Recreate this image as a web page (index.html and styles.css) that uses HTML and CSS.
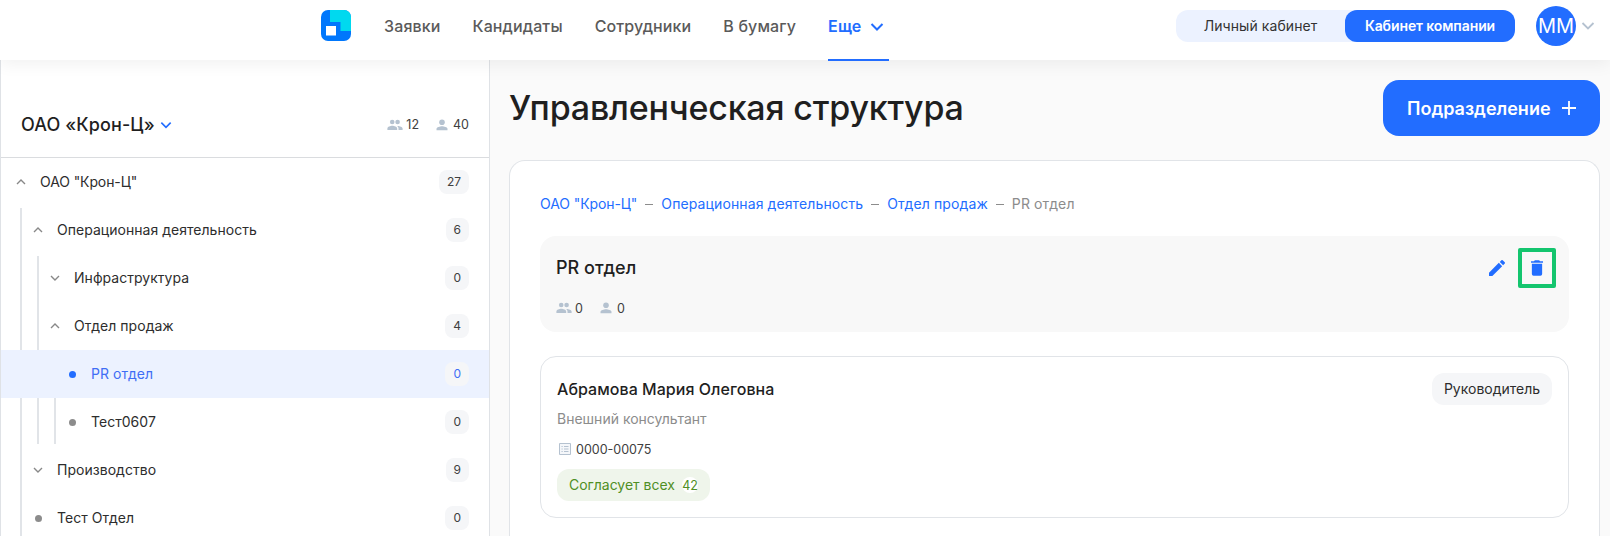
FILE: index.html
```html
<!DOCTYPE html>
<html lang="ru">
<head>
<meta charset="utf-8">
<title>Управленческая структура</title>
<link rel="stylesheet" href="styles.css">
</head>
<body>
<svg class="defs" width="0" height="0">
  <symbol id="people" viewBox="0 0 16 12"><circle cx="5.2" cy="3" r="2.3"/><circle cx="10.6" cy="3" r="2.3"/><path d="M.4 11V9.6C.4 7.8 3.4 6.8 5.3 6.8s4.900 1 4.900 2.800V11zM11.500 11V9.600c0-1-.5-1.900-1.400-2.600 2-.2 5.500.7 5.500 2.600V11z"/></symbol>
  <symbol id="person" viewBox="0 0 12 12"><circle cx="6" cy="3.300" r="2.800"/><path d="M.5 11.300V10C.5 8.200 4 7.300 6 7.300s5.500.9 5.500 2.700v1.300z"/></symbol>
  <symbol id="down" viewBox="0 0 12 12"><path d="M2 4l4 4 4-4" fill="none" stroke="currentColor" stroke-width="1.400"/></symbol>
  <symbol id="up" viewBox="0 0 12 12"><path d="M2 8l4-4 4 4" fill="none" stroke="currentColor" stroke-width="1.400"/></symbol>
</svg>
<header class="header">
  <svg class="logo" viewBox="0 0 30 31"><rect width="30" height="31" rx="7" fill="#0077fc"/><path d="M9 0h14a7 7 0 0 1 7 7v14H19.500V12H9z" fill="#00d9ef"/><rect x="5" y="16" width="10" height="9.500" fill="#fff"/></svg>
  <nav class="nav">
    <a>Заявки</a><a>Кандидаты</a><a>Сотрудники</a><a>В бумагу</a>
    <a class="active">Еще<svg class="nav-chevron" viewBox="0 0 14 10"><path d="M1.500 2L7 7.500 12.500 2" fill="none" stroke="currentColor" stroke-width="2"/></svg></a>
  </nav>
  <div class="switch"><span class="switch-item">Личный кабинет</span><span class="switch-item on">Кабинет компании</span></div>
  <div class="avatar">ММ</div>
  <svg class="user-chevron" viewBox="0 0 14 10"><path d="M1.500 2L7 7.500 12.500 2" fill="none" stroke="currentColor" stroke-width="1.800"/></svg>
</header>
<div class="layout">
  <aside class="sidebar">
    <div class="company">
      <span class="company-name">ОАО «Крон-Ц»</span>
      <svg class="company-chevron"><use href="#down"/></svg>
      <div class="stats"><svg class="people"><use href="#people"/></svg><span>12</span><svg class="person"><use href="#person"/></svg><span>40</span></div>
    </div>
    <div class="tree">
      <div class="row l0"><svg class="mark"><use href="#up"/></svg><span class="label">ОАО "Крон-Ц"</span><span class="count">27</span></div>
      <div class="row l1"><i class="guide first"></i><svg class="mark"><use href="#up"/></svg><span class="label">Операционная деятельность</span><span class="count">6</span></div>
      <div class="row l2"><i class="guide"></i><i class="guide first"></i><svg class="mark"><use href="#down"/></svg><span class="label">Инфраструктура</span><span class="count">0</span></div>
      <div class="row l2"><i class="guide"></i><i class="guide"></i><svg class="mark"><use href="#up"/></svg><span class="label">Отдел продаж</span><span class="count">4</span></div>
      <div class="row l3 selected"><i class="guide"></i><i class="guide"></i><i class="guide"></i><b class="dot"></b><span class="label">PR отдел</span><span class="count">0</span></div>
      <div class="row l3"><i class="guide"></i><i class="guide last"></i><i class="guide last"></i><b class="dot"></b><span class="label">Тест0607</span><span class="count">0</span></div>
      <div class="row l1"><i class="guide"></i><svg class="mark"><use href="#down"/></svg><span class="label">Производство</span><span class="count">9</span></div>
      <div class="row l1 end"><i class="guide"></i><b class="dot"></b><span class="label">Тест Отдел</span><span class="count">0</span></div>
    </div>
  </aside>
  <main class="main">
    <div class="title-row">
      <h1>Управленческая структура</h1>
      <button class="add"><span>Подразделение</span><svg viewBox="0 0 14 14"><path d="M7 0v14M0 7h14" stroke="#fff" stroke-width="1.800"/></svg></button>
    </div>
    <section class="card">
      <div class="crumbs"><a>ОАО "Крон-Ц"</a><i></i><a>Операционная деятельность</a><i></i><a>Отдел продаж</a><i></i><span>PR отдел</span></div>
      <div class="unit">
        <div class="unit-info">
          <h2>PR отдел</h2>
          <div class="stats"><svg class="people"><use href="#people"/></svg><span>0</span><svg class="person"><use href="#person"/></svg><span>0</span></div>
        </div>
        <div class="actions">
          <svg class="pencil" viewBox="3 3 18 18"><path d="M3 17.250V21h3.750L17.810 9.940l-3.750-3.750zM20.710 7.040a1 1 0 0 0 0-1.410l-2.340-2.340a1 1 0 0 0-1.410 0l-1.830 1.830 3.750 3.750z"/></svg>
          <span class="highlight"><svg class="trash" viewBox="5 3 14 18"><path d="M6 19a2 2 0 0 0 2 2h8a2 2 0 0 0 2-2V7H6zM19 4h-3.500l-1-1h-5l-1 1H5v2h14z"/></svg></span>
        </div>
      </div>
      <div class="employee">
        <div class="employee-info">
          <h3>Абрамова Мария Олеговна</h3>
          <p>Внешний консультант</p>
          <div class="number"><svg viewBox="0 0 12 12"><path d="M.5.500h11v11H.5z" fill="#f5f7fa" stroke="#b5c2d0"/><path d="M2.500 3.500h1.200M2.500 6h1.200M2.500 8.500h1.200M5 3.500h4.500M5 6h4.500M5 8.500h4.500" stroke="#b5c2d0"/></svg><span>0000-00075</span></div>
          <div class="approves"><span>Согласует всех</span><b>42</b></div>
        </div>
        <span class="role">Руководитель</span>
      </div>
    </section>
  </main>
</div>
</body>
</html>
```
FILE: styles.css
```css
* { box-sizing: border-box; }
body { margin: 0; height: 536px; overflow: hidden; background: #fafafa; color: #1f1f1f; font-family: Inter, "Liberation Sans", sans-serif; font-size: 14px; }
h1, h2, h3, p { margin: 0; font-weight: 500; white-space: nowrap; }
span, a { white-space: nowrap; }
svg { display: block; flex: none; }
.defs { position: absolute; }
.header { position: relative; z-index: 1; display: flex; height: 60px; padding-left: 321px; background: #fff; box-shadow: 0 4px 16px rgba(0, 0, 0, .06); }
.logo { width: 30px; height: 31px; margin-top: 10px; }
.nav { display: flex; gap: 32px; height: 61px; margin-left: 33px; color: #5a5a5a; font-size: 16px; font-weight: 500; letter-spacing: .13px; line-height: 52px; }
.nav .active { display: flex; width: 61px; color: #226dff; border-bottom: 2px solid #226dff; font-weight: 600; }
.nav-chevron { width: 14px; height: 10px; margin: 22px 0 0 9px; }
.switch { display: flex; width: 339px; height: 32px; margin: 10px 0 0 auto; border-radius: 12px; background: #ecf2ff; }
.switch-item { width: 169px; color: #333; text-align: center; letter-spacing: .08px; line-height: 32px; }
.switch-item.on { width: 170px; border-radius: 12px; background: #226dff; color: #fff; font-weight: 600; letter-spacing: -.1px; }
.avatar { width: 40px; height: 40px; margin: 6px 0 0 21px; border-radius: 50%; background: #226dff; color: #fff; font-size: 20px; line-height: 40px; text-align: center; }
.user-chevron { width: 14px; height: 10px; margin: 21px 15px 0 5px; color: #b5c2d0; }
.layout { display: flex; height: 476px; }
.sidebar { flex: none; width: 490px; height: 476px; overflow: hidden; background: #fff; border: solid #dfe2e6; border-width: 0 1px; }
.company { display: flex; align-items: center; height: 98px; padding: 32px 20px 0 20px; border-bottom: 1px solid #dadcdf; }
.company-name { font-size: 18px; font-weight: 500; letter-spacing: .1px; }
.company-chevron { width: 14px; height: 14px; margin-left: 4px; color: #226dff; }
.stats { display: flex; align-items: center; font-size: 12.5px; color: #404040; }
.company .stats { margin-left: auto; }
.stats svg { fill: #b5c2d0; }
.people { width: 16px; height: 12px; margin-right: 3px; }
.person { width: 12px; height: 12px; margin: 0 5px 0 17px; }
.row { display: flex; align-items: center; height: 48px; padding-right: 20px; }
.row.end { height: 42px; }
.row.end .dot, .row.end .label, .row.end .count { position: relative; top: 3px; }
.l0 { padding-left: 14px; }
.l1, .l2, .l3 { padding-left: 19px; }
.guide { align-self: stretch; flex: none; width: 2px; margin-right: 15px; background: #e1e4e8; }
.guide.first { height: 46px; align-self: flex-end; }
.guide.last { height: 46px; align-self: flex-start; }
.mark { width: 12px; height: 12px; margin-left: -5px; color: #888; }
.l0 .mark { margin-left: 0; }
.label { margin: 0 0 2px 13px; color: #2d2d2d; letter-spacing: .03px; }
.l0 .label { letter-spacing: -.1px; }
.dot { width: 7px; height: 7px; margin: 0 2.5px 0 -2.5px; border-radius: 50%; background: #8c8c8c; }
.count { min-width: 23px; height: 24px; margin-left: auto; padding: 0 8px; border-radius: 8px; background: #f5f6f8; color: #404040; font-size: 12px; line-height: 24px; text-align: center; }
.selected { background: #ecf2ff; }
.selected .guide { visibility: hidden; }
.selected .dot { background: #226dff; }
.selected .label, .selected .count { color: #3f6ef5; }
.main { display: flex; flex: 1; flex-direction: column; padding: 20px 10px 0 19px; }
.title-row { display: flex; flex: none; justify-content: space-between; height: 80px; }
h1 { font-size: 34px; font-weight: 500; letter-spacing: -.2px; line-height: 56px; }
.add { display: flex; align-items: center; justify-content: space-between; width: 217px; height: 56px; padding: 0 24px; border: 0; border-radius: 16px; background: #226dff; color: #fff; font: 600 18px Inter, sans-serif; }
.add svg { width: 14px; height: 14px; }
.card { flex: 1; min-height: 0; padding: 29px 30px 0; border: 1px solid #e1e4e8; border-bottom: 0; border-radius: 16px 16px 0 0; background: #fff; }
.crumbs { display: flex; align-items: center; height: 28px; color: #8c8c8c; letter-spacing: .11px; }
.crumbs a { color: #226dff; }
.crumbs a:first-child { letter-spacing: -.08px; }
.crumbs i { width: 8px; height: 1px; margin: 0 8px; background: #8c8c8c; }
.crumbs a, .crumbs span { margin-bottom: 1px; }
.unit { display: flex; justify-content: space-between; height: 96px; margin-top: 18px; padding: 12px 13px 0 16px; border-radius: 16px; background: #f8f8f8; }
h2 { font-size: 18px; line-height: 40px; }
.unit .stats { height: 40px; }
.actions { display: flex; }
.pencil { width: 16px; height: 16px; margin: 12px 13px 0 0; fill: #226dff; }
.highlight { display: flex; align-items: center; justify-content: center; width: 38px; height: 40px; border: 4px solid #14c56e; border-radius: 2px; }
.trash { width: 12px; height: 16px; fill: #226dff; }
.employee { display: flex; justify-content: space-between; align-items: flex-start; height: 162px; margin-top: 24px; padding: 16px 16px 0; border: 1px solid #e1e4e8; border-radius: 16px; }
h3 { font-size: 16px; letter-spacing: .04px; line-height: 32px; }
.employee p { color: #8c8c8c; font-weight: 400; line-height: 28px; }
.number { display: flex; align-items: center; gap: 5px; height: 32px; padding-left: 2px; color: #404040; font-size: 12.5px; }
.number svg { width: 12px; height: 12px; }
.approves { display: flex; align-items: center; justify-content: space-between; width: 153px; height: 32px; margin-top: 4px; padding: 0 12px; border-radius: 12px; background: #eff5eb; color: #4f8f25; }
.approves span { margin-bottom: 1px; }
.approves b { display: flex; align-items: center; justify-content: center; width: 16px; height: 16px; border-radius: 50%; background: #fff; font-size: 12.5px; font-weight: 400; }
.role { width: 120px; height: 32px; border-radius: 12px; background: #f5f6f8; color: #2d2d2d; line-height: 32px; text-align: center; }
```
